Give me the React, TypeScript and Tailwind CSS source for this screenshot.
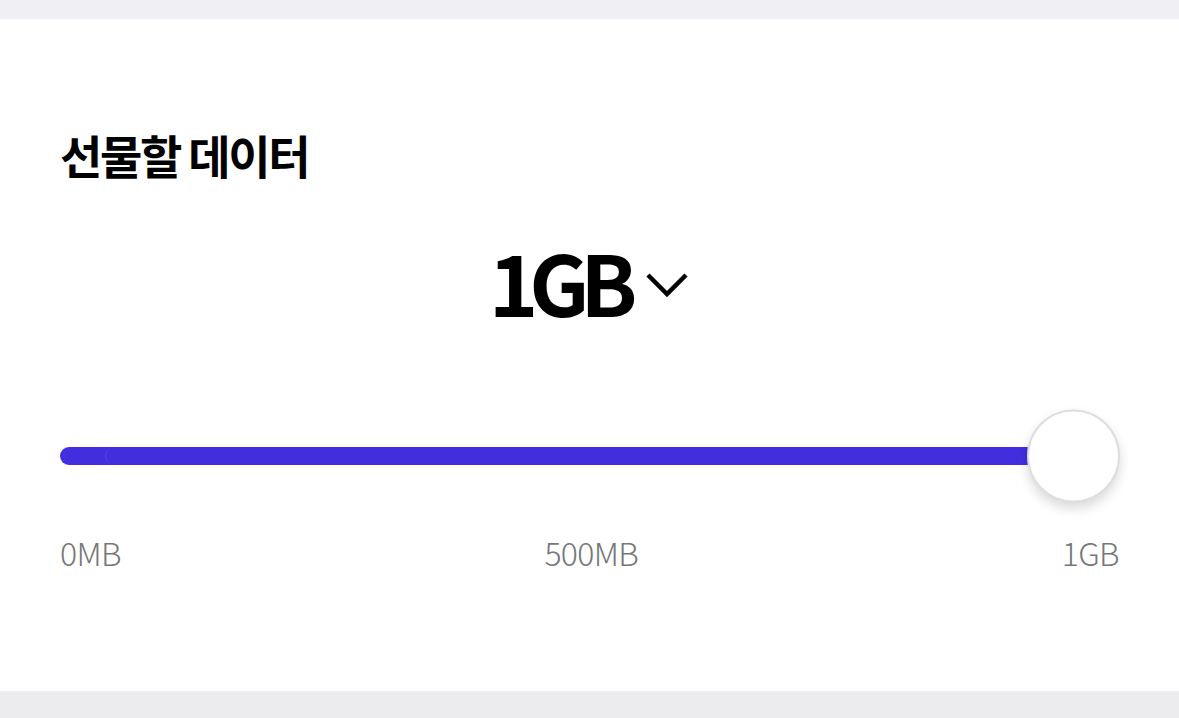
const font = { fontFamily: '"Noto Sans CJK KR", "Noto Sans", sans-serif' };

export default function App() {
  return (
    <div className="w-full h-[718px] bg-white flex flex-col" style={font}>
      <div className="h-[19px] bg-[#f0f0f4] shrink-0" />

      <div className="flex-1 px-[60px] pt-[112px]">
        <h2 className="text-[46px] font-bold leading-none tracking-[-0.05em] text-black">선물할 데이터</h2>

        <div className="flex items-center justify-center mt-[62px] gap-[16px]">
          <span className="text-[84px] font-bold leading-none tracking-[-0.11em] text-black">1GB</span>
          <svg width="46" height="30" viewBox="0 0 46 30" fill="none" className="mt-[6px]">
            <path d="M4 6 L23 25 L42 6" stroke="#000" strokeWidth="4.5" />
          </svg>
        </div>

        <div className="relative mt-[124px] h-[18px]">
          <div className="absolute inset-0 rounded-full bg-[#412fdf]" />
          <div className="absolute left-[45px] right-0 top-0 bottom-0 rounded-full bg-[#412fdf] border-l border-[#5545e6]" />
          <div className="absolute right-[-1px] top-1/2 -translate-y-1/2 w-[93px] h-[93px] rounded-full bg-white border-2 border-[#dedede] shadow-[0_6px_12px_rgba(0,0,0,0.15)]" />
        </div>

        <div className="flex justify-between items-center mt-[71px] text-[32px] font-light text-[#777777] tracking-[-0.02em] leading-none">
          <span>0MB</span>
          <span>500MB</span>
          <span>1GB</span>
        </div>
      </div>

      <div className="h-[27px] bg-[#ececef] shrink-0" />
    </div>
  );
}
